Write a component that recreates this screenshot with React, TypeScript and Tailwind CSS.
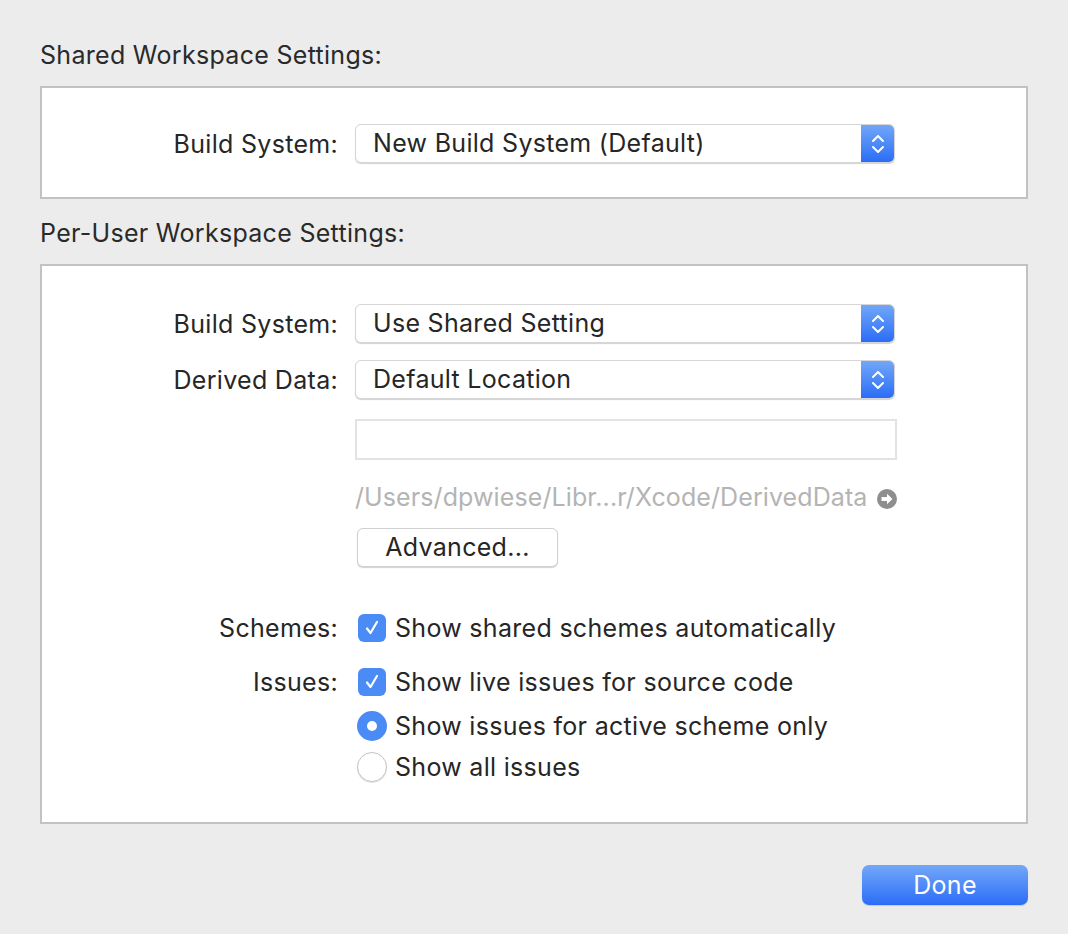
import React from 'react';

const font = { fontFamily: 'Inter, "Noto Sans", "Liberation Sans", sans-serif', letterSpacing: '0.3px' };

function Chevrons() {
  return (
    <svg width="14" height="22" viewBox="0 0 14 22" fill="none">
      <path d="M2 8 L7 3 L12 8" stroke="white" strokeWidth="2" strokeLinecap="round" strokeLinejoin="round" />
      <path d="M2 14 L7 19 L12 14" stroke="white" strokeWidth="2" strokeLinecap="round" strokeLinejoin="round" />
    </svg>
  );
}

function PopUp({ value }: { value: string }) {
  return (
    <div className="flex h-[39px] w-[540px] items-stretch rounded-[6px] border border-[#d6d6d6] bg-white shadow-[0_1px_1px_rgba(0,0,0,0.18)]">
      <div className="flex flex-1 items-center pl-[17px] pt-[1px] text-[25px] text-[#262626]">{value}</div>
      <div className="flex w-[33px] items-center justify-center rounded-r-[5px] bg-gradient-to-b from-[#72a6f8] to-[#2a6cf6]">
        <Chevrons />
      </div>
    </div>
  );
}

function Checkbox() {
  return (
    <div className="flex h-[28px] w-[28px] items-center justify-center rounded-[6px] bg-[#4a8bf5]">
      <svg width="22" height="22" viewBox="0 0 22 22" fill="none">
        <path d="M6 11.5 L9.5 16 L16 5" stroke="white" strokeWidth="2.2" strokeLinecap="round" strokeLinejoin="round" />
      </svg>
    </div>
  );
}

function Radio({ on }: { on?: boolean }) {
  if (on) {
    return (
      <div className="flex h-[30px] w-[30px] items-center justify-center rounded-full bg-[#4a8bf5]">
        <div className="h-[10px] w-[10px] rounded-full bg-white" />
      </div>
    );
  }
  return <div className="h-[30px] w-[30px] rounded-full border border-[#c4c4c4] bg-white shadow-[0_1px_1px_rgba(0,0,0,0.12)]" />;
}

function Row({ label, children, className = '' }: { label?: string; children: React.ReactNode; className?: string }) {
  return (
    <div className={`flex items-center ${className}`}>
      <div className="w-[296px] text-right text-[25px] leading-[36px] text-[#262626]">{label}</div>
      <div className="ml-[17px]">{children}</div>
    </div>
  );
}

export default function App() {
  return (
    <div className="min-h-[934px] w-[1068px] bg-[#ececec] px-[40px] pt-[41px]" style={font}>
      <div className="h-[28px] text-[25px] leading-[28px] text-[#2a2a2a]">Shared Workspace Settings:</div>

      <div className="mt-[17px] h-[113px] border-2 border-[#c2c2c2] bg-white pt-[36px]">
        <Row label="Build System:">
          <PopUp value="New Build System (Default)" />
        </Row>
      </div>

      <div className="mt-[20px] h-[28px] text-[25px] leading-[28px] text-[#2a2a2a]">Per-User Workspace Settings:</div>

      <div className="mt-[17px] h-[560px] border-2 border-[#c2c2c2] bg-white pt-[38px]">
        <Row label="Build System:">
          <PopUp value="Use Shared Setting" />
        </Row>
        <Row label="Derived Data:" className="mt-[17px]">
          <PopUp value="Default Location" />
        </Row>
        <Row className="mt-[20px]">
          <div className="h-[41px] w-[542px] border-2 border-[#e3e3e3] bg-white" />
        </Row>
        <Row className="mt-[19px]">
          <div className="flex w-[542px] items-center justify-between">
            <span className="text-[25px] leading-[36px] tracking-[0.1px] text-[#b4b4b4]">/Users/dpwiese/Libr...r/Xcode/DerivedData</span>
            <svg width="20" height="20" viewBox="0 0 20 20" className="mt-[3px]">
              <circle cx="10" cy="10" r="10" fill="#8e8e8e" />
              <path d="M4.5 8 H10 V4.8 L15.5 10 L10 15.2 V12 H4.5 Z" fill="white" />
            </svg>
          </div>
        </Row>
        <Row className="mt-[13px]">
          <div className="ml-[2px] flex h-[39px] w-[201px] items-center justify-center rounded-[6px] border border-[#d0d0d0] bg-white pt-[1px] text-[25px] text-[#262626] shadow-[0_1px_1px_rgba(0,0,0,0.18)]">
            Advanced...
          </div>
        </Row>
        <Row label="Schemes:" className="mt-[43px]">
          <div className="flex items-center gap-[9px] pl-[3px]">
            <Checkbox />
            <span className="text-[25px] leading-[36px] text-[#262626]">Show shared schemes automatically</span>
          </div>
        </Row>
        <Row label="Issues:" className="mt-[18px]">
          <div className="flex items-center gap-[9px] pl-[3px]">
            <Checkbox />
            <span className="text-[25px] leading-[36px] text-[#262626]">Show live issues for source code</span>
          </div>
        </Row>
        <Row className="mt-[8px]">
          <div className="flex items-center gap-[8px] pl-[2px]">
            <Radio on />
            <span className="text-[25px] leading-[36px] text-[#262626]">Show issues for active scheme only</span>
          </div>
        </Row>
        <Row className="mt-[5px]">
          <div className="flex items-center gap-[8px] pl-[2px]">
            <Radio />
            <span className="text-[25px] leading-[36px] text-[#262626]">Show all issues</span>
          </div>
        </Row>
      </div>

      <div className="mt-[41px] flex justify-end">
        <div className="flex h-[40px] w-[166px] items-center justify-center rounded-[7px] bg-gradient-to-b from-[#73a7f8] to-[#2b6cf6] pt-[1px] text-[25px] text-white shadow-[0_1px_1px_rgba(0,0,0,0.15)]">
          Done
        </div>
      </div>
    </div>
  );
}
